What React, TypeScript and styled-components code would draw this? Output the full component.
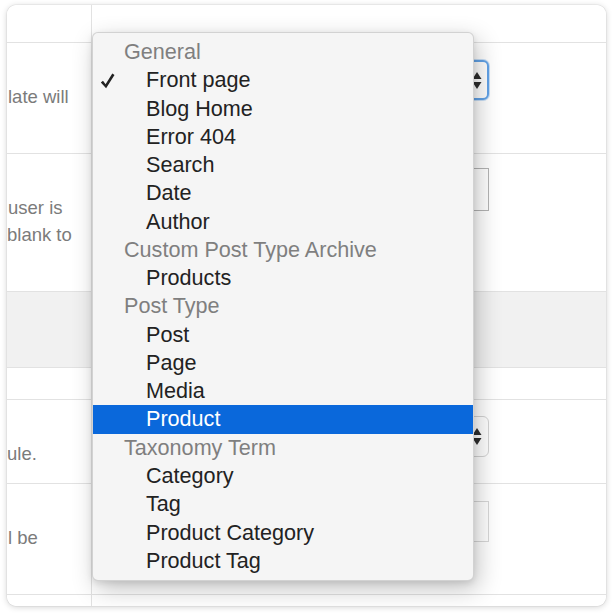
import React from "react";
import styled, { createGlobalStyle } from "styled-components";

const Global = createGlobalStyle`
  html, body { margin: 0; padding: 0; background: #ffffff; }
  body { font-family: "Liberation Sans", Arial, Helvetica, sans-serif; }
  * { box-sizing: border-box; }
`;

const Page = styled.div`
  width: 614px;
  height: 614px;
  padding: 5px 8px 8px 7px;
  background: #ffffff;
`;

const Card = styled.div`
  position: relative;
  width: 599px;
  height: 601px;
  border-radius: 9px;
  background: #ffffff;
  overflow: hidden;
  box-shadow: 0 0 1px rgba(0, 0, 0, 0.35), 0 1px 6px rgba(0, 0, 0, 0.18);
  display: flex;
  flex-direction: column;
`;

const Row = styled.div<{ $h: number; $grey?: boolean; $last?: boolean }>`
  display: flex;
  flex: ${(p) => (p.$last ? "1" : "none")};
  height: ${(p) => (p.$last ? "auto" : `${p.$h}px`)};
  background: ${(p) => (p.$grey ? "#f1f1f1" : "#ffffff")};
  border-bottom: ${(p) => (p.$last ? "none" : "1px solid #e2e2e2")};
`;

const LabelCell = styled.div<{ $shift?: number }>`
  width: 85px;
  flex: none;
  border-right: 1px solid #e2e2e2;
  overflow: hidden;
  display: flex;
  flex-direction: column;
  justify-content: center;
  padding-top: ${(p) => p.$shift || 0}px;
  padding-bottom: 3px;
  font-size: 18.5px;
  line-height: 27px;
  color: #7b7b7b;
`;

const LabelLine = styled.span<{ $indent?: number }>`
  display: block;
  white-space: nowrap;
  margin-left: ${(p) => p.$indent ?? 1}px;
`;

const FieldCell = styled.div<{ $top?: number }>`
  flex: 1;
  display: flex;
  justify-content: flex-end;
  align-items: flex-start;
  padding-top: ${(p) => p.$top || 0}px;
  padding-right: 117px;
`;

const SelectBox = styled.div<{ $focused?: boolean }>`
  width: 300px;
  height: ${(p) => (p.$focused ? 40 : 41)}px;
  border-radius: 6px;
  background: #ffffff;
  border: ${(p) => (p.$focused ? "2px solid #62a3e8" : "1px solid #d4d4d4")};
  box-shadow: ${(p) => (p.$focused ? "0 0 0 1px rgba(98,163,232,0.35)" : "none")};
  display: flex;
  align-items: center;
  justify-content: flex-end;
  padding-right: ${(p) => (p.$focused ? 5 : 6)}px;
`;

const InputBox = styled.div<{ $h: number; $dark?: boolean }>`
  width: 300px;
  height: ${(p) => p.$h}px;
  background: #ffffff;
  border: 1px solid ${(p) => (p.$dark ? "#b4b4b4" : "#d8d8d8")};
`;

const Arrows = () => (
  <svg width="10" height="17" viewBox="0 0 10 17">
    <path d="M5 0 L9.5 7 L0.5 7 Z" fill="#2e2e2e" />
    <path d="M5 17 L9.5 10 L0.5 10 Z" fill="#2e2e2e" />
  </svg>
);

const Menu = styled.div`
  position: absolute;
  left: 85px;
  top: 27px;
  width: 382px;
  height: 549px;
  background: #f5f5f5;
  border-radius: 6px;
  border: 1px solid rgba(0, 0, 0, 0.14);
  box-shadow: 4px 8px 24px rgba(0, 0, 0, 0.24), 0 2px 6px rgba(0, 0, 0, 0.1);
  padding-top: 5px;
  font-size: 21.6px;
  overflow: hidden;
`;

const GroupLabel = styled.div`
  height: 28.28px;
  line-height: 28.28px;
  padding-left: 31px;
  color: #7f7f7f;
  white-space: nowrap;
`;

const Item = styled.div<{ $selected?: boolean }>`
  height: 28.28px;
  display: grid;
  grid-template-columns: 53px 1fr;
  align-items: center;
  line-height: 28.28px;
  background: ${(p) => (p.$selected ? "#0a68db" : "transparent")};
  color: ${(p) => (p.$selected ? "#ffffff" : "#222222")};
  white-space: nowrap;
`;

const CheckSlot = styled.span`
  display: flex;
  align-items: center;
  padding-left: 7px;
  padding-top: 1px;
`;

const Check = () => (
  <svg width="15" height="16" viewBox="0 0 15 16">
    <path
      d="M0.8 9.4 L3 7.7 L5.6 11.2 L12.3 0.6 L14.5 2 L6.1 15.2 Z"
      fill="#222222"
    />
  </svg>
);

type Entry = { kind: "group" | "item"; text: string; checked?: boolean; selected?: boolean };

const entries: Entry[] = [
  { kind: "group", text: "General" },
  { kind: "item", text: "Front page", checked: true },
  { kind: "item", text: "Blog Home" },
  { kind: "item", text: "Error 404" },
  { kind: "item", text: "Search" },
  { kind: "item", text: "Date" },
  { kind: "item", text: "Author" },
  { kind: "group", text: "Custom Post Type Archive" },
  { kind: "item", text: "Products" },
  { kind: "group", text: "Post Type" },
  { kind: "item", text: "Post" },
  { kind: "item", text: "Page" },
  { kind: "item", text: "Media" },
  { kind: "item", text: "Product", selected: true },
  { kind: "group", text: "Taxonomy Term" },
  { kind: "item", text: "Category" },
  { kind: "item", text: "Tag" },
  { kind: "item", text: "Product Category" },
  { kind: "item", text: "Product Tag" },
];

export default function App() {
  return (
    <>
      <Global />
      <Page>
        <Card>
          <Row $h={38}>
            <LabelCell />
            <FieldCell />
          </Row>
          <Row $h={111}>
            <LabelCell>
              <LabelLine>late will</LabelLine>
            </LabelCell>
            <FieldCell $top={17}>
              <SelectBox $focused>
                <Arrows />
              </SelectBox>
            </FieldCell>
          </Row>
          <Row $h={138}>
            <LabelCell>
              <LabelLine $indent={1}>user is</LabelLine>
              <LabelLine $indent={0}>blank to</LabelLine>
            </LabelCell>
            <FieldCell $top={14}>
              <InputBox $h={43} $dark />
            </FieldCell>
          </Row>
          <Row $h={76} $grey>
            <LabelCell />
            <FieldCell />
          </Row>
          <Row $h={32}>
            <LabelCell />
            <FieldCell />
          </Row>
          <Row $h={84}>
            <LabelCell $shift={27}>
              <LabelLine $indent={0}>ule.</LabelLine>
            </LabelCell>
            <FieldCell $top={16}>
              <SelectBox>
                <Arrows />
              </SelectBox>
            </FieldCell>
          </Row>
          <Row $h={111}>
            <LabelCell>
              <LabelLine $indent={1}>l be</LabelLine>
            </LabelCell>
            <FieldCell $top={17}>
              <InputBox $h={41} />
            </FieldCell>
          </Row>
          <Row $h={11} $last>
            <LabelCell />
            <FieldCell />
          </Row>

          <Menu>
            {entries.map((e, i) =>
              e.kind === "group" ? (
                <GroupLabel key={i}>{e.text}</GroupLabel>
              ) : (
                <Item key={i} $selected={e.selected}>
                  <CheckSlot>{e.checked ? <Check /> : null}</CheckSlot>
                  <span>{e.text}</span>
                </Item>
              )
            )}
          </Menu>
        </Card>
      </Page>
    </>
  );
}
